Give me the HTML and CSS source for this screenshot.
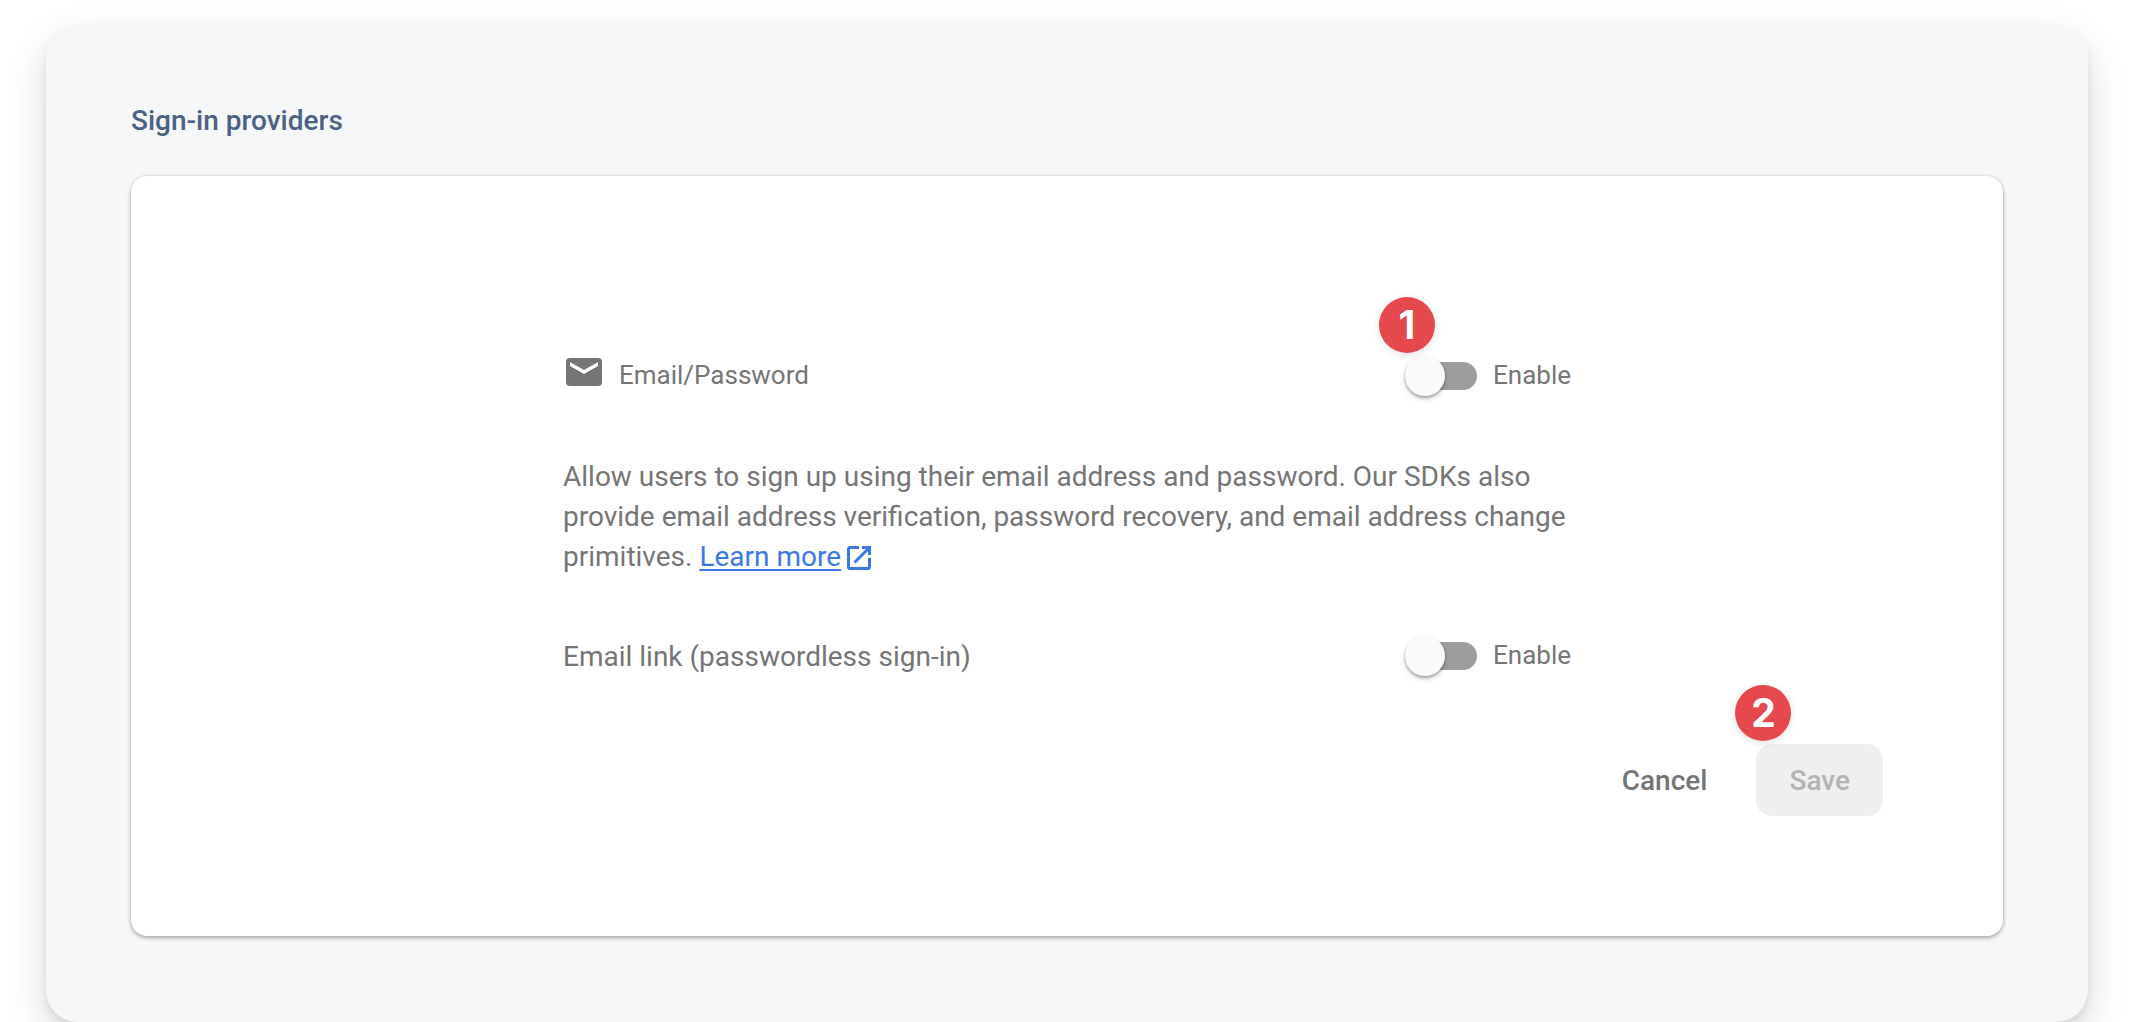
FILE: index.html
```html
<!DOCTYPE html>
<html lang="en">
<head>
<meta charset="utf-8">
<meta name="viewport" content="width=device-width, initial-scale=1">
<title>Sign-in providers</title>
<link rel="stylesheet" href="styles.css">
</head>
<body>
<main class="panel">
  <h1 class="panel-title">Sign-in providers</h1>
  <form class="card">
    <div class="content">
      <div class="row">
        <div class="provider">
          <svg class="mail-icon" viewBox="0 0 36 28" aria-hidden="true"><path fill="#757575" fill-rule="evenodd" d="M4 0h28a4 4 0 0 1 4 4v20a4 4 0 0 1-4 4H4a4 4 0 0 1-4-4V4a4 4 0 0 1 4-4zM4 4v4l14 8 14-8V4l-14 8z"/></svg>
          <span class="label">Email/Password</span>
        </div>
        <label class="toggle">
          <input class="switch" type="checkbox" role="switch">
          <span class="label">Enable</span>
          <span class="badge">1</span>
        </label>
      </div>
      <p class="text">Allow users to sign up using their email address and password. Our SDKs also<br>provide email address verification, password recovery, and email address change<br>primitives. <a class="link" href="#">Learn more</a><svg class="open-icon" viewBox="0 0 24 24" aria-hidden="true"><g fill="none" stroke="#3b78e7" stroke-width="3"><path d="M12 1.500H3A1.500 1.500 0 0 0 1.500 3v18A1.500 1.500 0 0 0 3 22.500h18a1.500 1.500 0 0 0 1.500-1.500v-9"/><path d="M15 1.500h7.500V9M22 2L7.500 16.500"/></g></svg></p>
      <div class="row">
        <span class="text">Email link (passwordless sign-in)</span>
        <label class="toggle">
          <input class="switch" type="checkbox" role="switch">
          <span class="label">Enable</span>
        </label>
      </div>
    </div>
    <div class="actions">
      <button class="button" type="button">Cancel</button>
      <div class="save">
        <button class="button button-save" type="submit" disabled>Save</button>
        <span class="badge">2</span>
      </div>
    </div>
  </form>
</main>
</body>
</html>
```
FILE: styles.css
```css
* {
  box-sizing: border-box;
}

body {
  margin: 0;
  padding: 25px 46px 0;
  background: #fff;
  color: #757575;
  font: 28px/40px Roboto, sans-serif;
}

.panel {
  padding: 76px 85px 86px;
  border-radius: 32px;
  background: #f5f7f9;
  box-shadow: 0 16px 40px rgba(0, 0, 0, 0.14), 0 6px 8px rgba(0, 0, 0, 0.08);
}

.panel-title {
  margin: 0 0 35px;
  color: #4c6284;
  font-size: 28px;
  font-weight: 500;
}

.card {
  padding: 180px 120px 120px;
  border-radius: 16px;
  background: #fff;
  box-shadow: 0 2px 4px rgba(0, 0, 0, 0.3), 0 0 3px rgba(0, 0, 0, 0.12);
}

.content {
  display: flex;
  flex-direction: column;
  gap: 60px;
  max-width: 1008px;
  margin: 0 auto;
}

.row {
  display: flex;
  align-items: center;
  justify-content: space-between;
}

.provider {
  display: flex;
  align-items: center;
  gap: 17px;
  padding-left: 3px;
}

.mail-icon {
  width: 36px;
  height: 28px;
  margin-bottom: 8px;
}

.label {
  margin-bottom: 2px;
  font-size: 26px;
  line-height: 38px;
}

.text {
  margin: 1px 0 -1px;
}

.link {
  color: #3b78e7;
  text-decoration-thickness: 2px;
  text-underline-offset: 3px;
  text-decoration-skip-ink: none;
}

.open-icon {
  width: 24px;
  height: 24px;
  margin-left: 6px;
  vertical-align: -4px;
}

.toggle {
  position: relative;
  display: flex;
  align-items: center;
  gap: 16px;
}

.switch {
  position: relative;
  appearance: none;
  width: 72px;
  height: 28px;
  margin: 0;
  border-radius: 14px;
  background: #9e9e9e;
}

.switch::before {
  content: "";
  position: absolute;
  top: -6px;
  left: 0;
  width: 40px;
  height: 40px;
  border-radius: 50%;
  background: #fafafa;
  box-shadow: 0 2px 3px rgba(0, 0, 0, 0.3), 0 3px 6px rgba(0, 0, 0, 0.12);
}

.switch:checked {
  background: #a0c0f5;
}

.switch:checked::before {
  left: 32px;
  background: #3b78e7;
}

.badge {
  position: absolute;
  top: -59px;
  left: -26px;
  width: 56px;
  height: 56px;
  border-radius: 50%;
  background: #e5484d;
  box-shadow: 0 2px 8px rgba(0, 0, 0, 0.12);
  color: #fff;
  font: 700 39px/56px Inter, sans-serif;
  text-align: center;
}

.actions {
  display: flex;
  justify-content: flex-end;
  gap: 16px;
  margin-top: 68px;
}

.save {
  position: relative;
}

.save .badge {
  left: -21px;
}

.button {
  height: 72px;
  padding: 2px 33px 0;
  border: 0;
  border-radius: 16px;
  background: none;
  color: #757575;
  font: 500 28px/40px Roboto, sans-serif;
}

.button-save {
  background: #efefef;
  color: #b3b3b3;
}
```
